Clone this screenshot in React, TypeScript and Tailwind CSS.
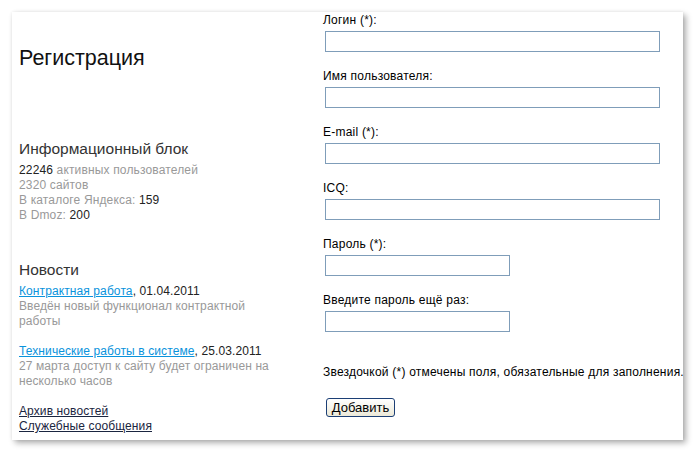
import React from "react";

const fields = [
  { label: "Логин (*):", w: "w-[335px]" },
  { label: "Имя пользователя:", w: "w-[335px]" },
  { label: "E-mail (*):", w: "w-[335px]" },
  { label: "ICQ:", w: "w-[335px]" },
  { label: "Пароль (*):", w: "w-[185px]" },
  { label: "Введите пароль ещё раз:", w: "w-[185px]" },
];

export default function App() {
  return (
    <div
      className="w-[696px] h-[453px] bg-white pt-[12px] pl-[12px]"
      style={{ fontFamily: '"Liberation Sans", Arial, sans-serif' }}
    >
      <div className="w-[671px] h-[428px] bg-white shadow-[3px_3px_6px_rgba(0,0,0,0.32),0_0_3px_rgba(0,0,0,0.08)] flex">
        {/* left column */}
        <div className="w-[311px] shrink-0 pl-[7px] flex flex-col">
          <h1 className="mt-[33px] text-[21.5px] leading-[26px] text-[#111] font-normal">Регистрация</h1>
          <h2 className="mt-[68px] text-[15.5px] leading-[20px] text-[#333] font-normal">Информационный блок</h2>
          <div className="mt-[4px] text-[12px] leading-[15px] tracking-[0.15px] text-[#999]">
            <div><span className="text-[#222]">22246</span> активных пользователей</div>
            <div>2320 сайтов</div>
            <div>В каталоге Яндекса: <span className="text-[#222]">159</span></div>
            <div>В Dmoz: <span className="text-[#222]">200</span></div>
          </div>
          <h2 className="mt-[37px] text-[15.5px] leading-[20px] text-[#333] font-normal">Новости</h2>
          <div className="mt-[4px] w-[262px] text-[12px] leading-[15px] tracking-[0.1px]">
            <div>
              <a href="#" className="text-[#0a93dc] underline">Контрактная работа</a>
              <span className="text-[#222]">, 01.04.2011</span>
            </div>
            <div className="text-[#999]">Введён новый функционал контрактной работы</div>
            <div className="mt-[15px]">
              <a href="#" className="text-[#0a93dc] underline">Технические работы в системе</a>
              <span className="text-[#222]">, 25.03.2011</span>
            </div>
            <div className="text-[#999]">27 марта доступ к сайту будет ограничен на несколько часов</div>
            <div className="mt-[15px]">
              <a href="#" className="text-[#1a2540] underline">Архив новостей</a>
            </div>
            <div>
              <a href="#" className="text-[#1a2540] underline">Служебные сообщения</a>
            </div>
          </div>
        </div>
        {/* right column */}
        <div className="min-w-0 flex flex-col pt-[1px] text-[12px] leading-[15px] tracking-[0.22px] text-black">
          {fields.map((f) => (
            <div key={f.label} className="h-[56px] flex flex-col">
              <label>{f.label}</label>
              <input
                type="text"
                className={`mt-[3px] ml-[2px] h-[21px] ${f.w} border border-[#7f9db9] bg-white outline-none`}
              />
            </div>
          ))}
          <div className="mt-[16px] whitespace-nowrap">Звездочкой (*) отмечены поля, обязательные для заполнения.</div>
          <div className="mt-[18px]">
            <button className="ml-[3px] h-[19px] w-[69px] rounded-[3px] border border-[#1c3f75] bg-gradient-to-b from-white to-[#ece9d8] text-[13px] leading-[15px] tracking-normal text-black">
              Добавить
            </button>
          </div>
        </div>
      </div>
    </div>
  );
}
